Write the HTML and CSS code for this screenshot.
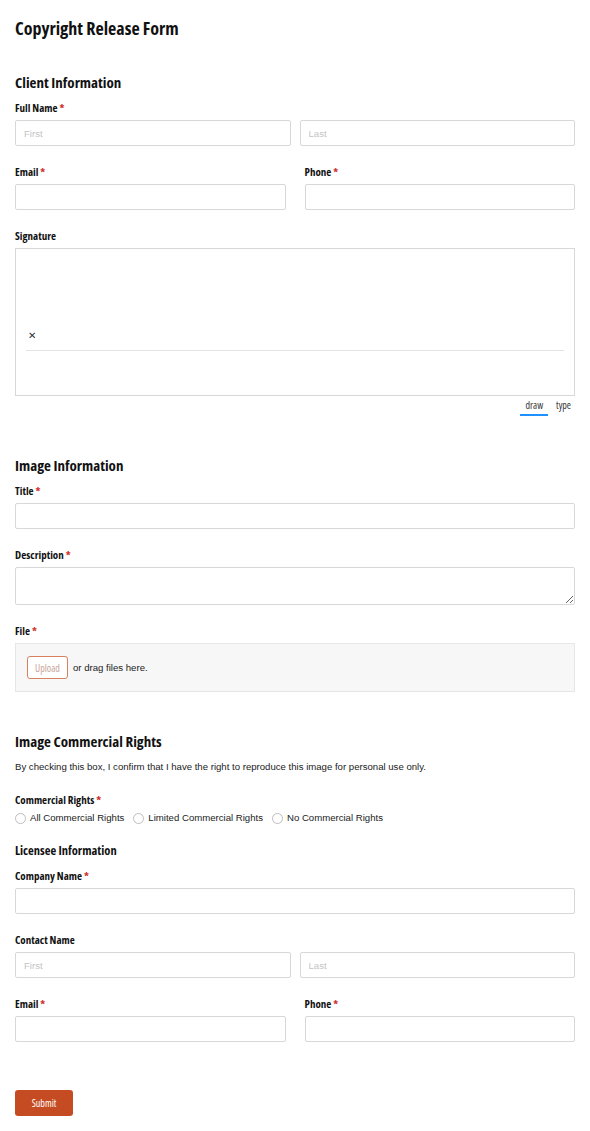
FILE: index.html
```html
<!DOCTYPE html>
<html lang="en">
<head>
<meta charset="utf-8">
<title>Copyright Release Form</title>
<link rel="stylesheet" href="styles.css">
</head>
<body>
<form class="form">
  <h1 class="form-title">Copyright Release Form</h1>

  <h2 class="section-title first">Client Information</h2>
  <div class="field">
    <div class="label">Full Name <span class="req">*</span></div>
    <div class="row row-tight">
      <input class="input" type="text" placeholder="First">
      <input class="input" type="text" placeholder="Last">
    </div>
  </div>
  <div class="row row-wide">
    <div class="field">
      <div class="label">Email <span class="req">*</span></div>
      <input class="input" type="text">
    </div>
    <div class="field">
      <div class="label">Phone <span class="req">*</span></div>
      <input class="input" type="text">
    </div>
  </div>
  <div class="field">
    <div class="label">Signature</div>
    <div class="sig-box">
      <div class="sig-x">&#x2715;</div>
      <div class="sig-line"></div>
    </div>
    <div class="sig-tabs">
      <span class="sig-tab active">draw</span>
      <span class="sig-tab">type</span>
    </div>
  </div>

  <h2 class="section-title">Image Information</h2>
  <div class="field">
    <div class="label">Title <span class="req">*</span></div>
    <input class="input" type="text">
  </div>
  <div class="field">
    <div class="label">Description <span class="req">*</span></div>
    <textarea class="textarea"></textarea>
  </div>
  <div class="field">
    <div class="label">File <span class="req">*</span></div>
    <div class="upload-zone">
      <span class="upload-btn">Upload</span>
      <span class="upload-text">or drag files here.</span>
    </div>
  </div>

  <h2 class="section-title">Image Commercial Rights</h2>
  <p class="note">By checking this box, I confirm that I have the right to reproduce this image for personal use only.</p>
  <div class="field field-radio">
    <div class="label label-radio">Commercial Rights <span class="req">*</span></div>
    <div class="radios">
      <label class="radio"><span class="radio-dot"></span>All Commercial Rights</label>
      <label class="radio"><span class="radio-dot"></span>Limited Commercial Rights</label>
      <label class="radio"><span class="radio-dot"></span>No Commercial Rights</label>
    </div>
  </div>

  <h3 class="sub-title">Licensee Information</h3>
  <div class="field">
    <div class="label">Company Name <span class="req">*</span></div>
    <input class="input" type="text">
  </div>
  <div class="field">
    <div class="label">Contact Name</div>
    <div class="row row-tight">
      <input class="input" type="text" placeholder="First">
      <input class="input" type="text" placeholder="Last">
    </div>
  </div>
  <div class="row row-wide">
    <div class="field">
      <div class="label">Email <span class="req">*</span></div>
      <input class="input" type="text">
    </div>
    <div class="field">
      <div class="label">Phone <span class="req">*</span></div>
      <input class="input" type="text">
    </div>
  </div>

  <div class="actions">
    <button class="submit" type="button">Submit</button>
  </div>
</form>
</body>
</html>
```

FILE: styles.css
```css
* { box-sizing: border-box; }

body {
  margin: 0;
  background: #fff;
  color: #222;
  font-family: "Liberation Sans", Arial, sans-serif;
  font-size: 9.6px;
}

.form {
  width: 590px;
  padding: 16px 15px 0 15px;
}

.form-title,
.section-title,
.sub-title,
.label,
.sig-tab,
.upload-btn,
.submit {
  font-family: "Open Sans", "DejaVu Sans Condensed", sans-serif;
  font-stretch: 75%;
}

.form-title {
  margin: 0 0 32px 0;
  font-size: 18px;
  line-height: 24px;
  font-weight: 700;
  color: #111;
}

.section-title {
  margin: 39px 0 9px 0;
  font-size: 15px;
  line-height: 20px;
  font-weight: 700;
  color: #111;
}
.section-title.first { margin-top: 0; }

.sub-title {
  margin: 0 0 10px 0;
  font-size: 12.5px;
  line-height: 16px;
  font-weight: 700;
  color: #111;
}

.field { margin-bottom: 19px; }
.field-radio { margin-bottom: 18px; }

.label {
  font-size: 11px;
  line-height: 14px;
  font-weight: 700;
  color: #111;
  margin-bottom: 5px;
}
.label-radio { margin-bottom: 4px; }

.req { color: #d0312d; }

.row { display: grid; grid-template-columns: 1fr 1fr; }
.row-tight { column-gap: 9px; }
.row-wide { column-gap: 19px; }

.input,
.textarea {
  display: block;
  width: 100%;
  height: 26px;
  margin: 0;
  padding: 0 8px;
  border: 1px solid #d8d8d8;
  border-radius: 2px;
  background: #fff;
  font-family: "Liberation Sans", Arial, sans-serif;
  font-size: 9.6px;
  color: #333;
  outline: none;
}
.input::placeholder { color: #c4c4c4; }

.textarea {
  height: 38px;
  resize: vertical;
}

.sig-box {
  height: 148px;
  border: 1px solid #d8d8d8;
  padding: 0 10px;
  display: flex;
  flex-direction: column;
  justify-content: flex-end;
  padding-bottom: 44px;
}
.sig-x {
  font-size: 10px;
  line-height: 12px;
  color: #333;
  padding-left: 2px;
  margin-bottom: 8px;
}
.sig-line {
  height: 1px;
  background: #e3e3e3;
}

.sig-tabs {
  display: flex;
  justify-content: flex-end;
  margin-top: 2px;
  gap: 4px;
}
.sig-tab {
  font-size: 10px;
  line-height: 14px;
  color: #333;
  padding: 0 4px 2px 4px;
  border-bottom: 2px solid transparent;
}
.sig-tab.active {
  border-bottom-color: #1e90ff;
  padding: 0 5px 2px 5px;
}

.upload-zone {
  height: 49px;
  background: #f7f7f7;
  border: 1px solid #e6e6e6;
  display: flex;
  align-items: center;
  padding-left: 11px;
}
.upload-btn {
  display: inline-flex;
  align-items: center;
  justify-content: center;
  width: 41px;
  height: 23px;
  border: 1px solid #d9805e;
  border-radius: 3px;
  background: #fff;
  color: #c9a49a;
  font-size: 10px;
}
.upload-text {
  margin-left: 5px;
  font-size: 9.6px;
  color: #222;
}

.note {
  margin: 0 0 19px 0;
  font-size: 9.6px;
  line-height: 14px;
  color: #222;
}

.radios {
  display: flex;
  gap: 9px;
}
.radio {
  display: inline-flex;
  align-items: center;
  font-size: 9.6px;
  line-height: 14px;
  color: #222;
}
.radio-dot {
  width: 11px;
  height: 11px;
  border: 1px solid #bdbdbd;
  border-radius: 50%;
  margin-right: 4px;
  background: #fff;
}

.actions { padding-top: 29px; }

.submit {
  width: 58px;
  height: 26px;
  border: 0;
  border-radius: 3px;
  background: #c54b22;
  color: #fff;
  font-size: 10px;
  padding: 0;
}
```
